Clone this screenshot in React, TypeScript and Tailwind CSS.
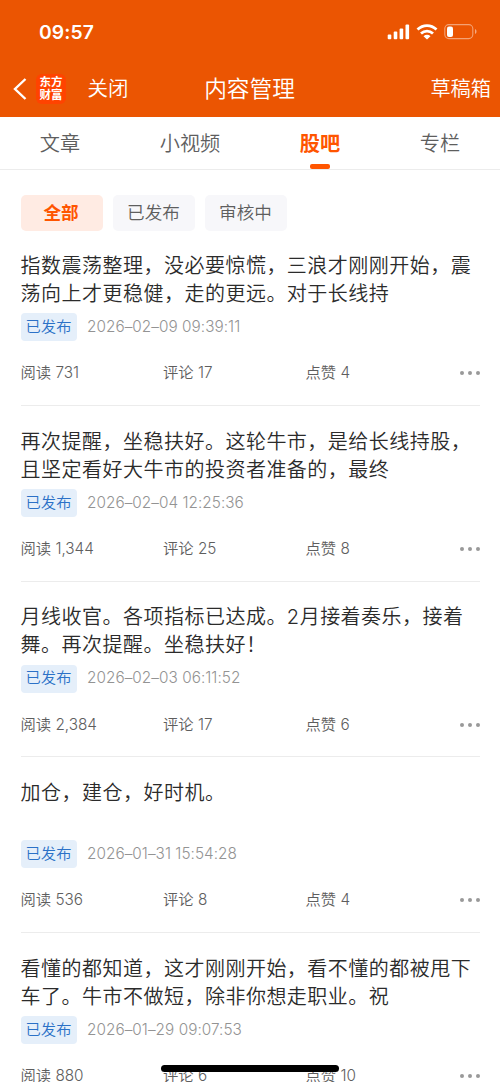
import React from "react";

type Post = {
  lines: string[];
  date: string;
  reads: string;
  comments: string;
  likes: string;
};

const posts: Post[] = [
  { lines: ["指数震荡整理，没必要惊慌，三浪才刚刚开始，震", "荡向上才更稳健，走的更远。对于长线持"], date: "2026–02–09 09:39:11", reads: "731", comments: "17", likes: "4" },
  { lines: ["再次提醒，坐稳扶好。这轮牛市，是给长线持股，", "且坚定看好大牛市的投资者准备的，最终"], date: "2026–02–04 12:25:36", reads: "1,344", comments: "25", likes: "8" },
  { lines: ["月线收官。各项指标已达成。2月接着奏乐，接着", "舞。再次提醒。坐稳扶好！"], date: "2026–02–03 06:11:52", reads: "2,384", comments: "17", likes: "6" },
  { lines: ["加仓，建仓，好时机。"], date: "2026–01–31 15:54:28", reads: "536", comments: "8", likes: "4" },
  { lines: ["看懂的都知道，这才刚刚开始，看不懂的都被甩下", "车了。牛市不做短，除非你想走职业。祝"], date: "2026–01–29 09:07:53", reads: "880", comments: "6", likes: "10" },
];

const tabs = ["文章", "小视频", "股吧", "专栏"];

function StatusBar() {
  return (
    <div className="flex h-[62px] items-center justify-between pl-[39px] pr-[23px] pt-[2px]">
      <span className="text-[19.300px] font-semibold leading-6 tracking-[0.100px]">09:57</span>
      <div className="flex items-center">
        <svg className="h-4 w-[23px]" viewBox="0 0 23 16" fill="white">
          <rect x="0.7" y="10.500" width="3.600" height="4.800" rx="1" />
          <rect x="6.700" y="7.500" width="3.600" height="7.800" rx="1" />
          <rect x="12.600" y="4.500" width="3.600" height="10.800" rx="1" />
          <rect x="18.500" y="0.500" width="3.600" height="14.800" rx="1" />
        </svg>
        <svg className="ml-[6px] h-4 w-[22px]" viewBox="0 0 22 16" fill="none" stroke="white" strokeWidth="2.800">
          <path d="M1.500 5.600C7 .400 15 .400 20.500 5.600" />
          <path d="M5 9.500C8.500 6.300 13.500 6.300 17 9.500" />
          <path d="M7.500 12.200c2-1.800 5-1.800 7 0L11 15.500z" fill="white" stroke="none" />
        </svg>
        <svg className="ml-[6px] h-4 w-[33px]" viewBox="0 0 33 16" fill="none">
          <rect x="0.800" y="0.600" width="28" height="14" rx="4" stroke="white" strokeOpacity=".45" strokeWidth="1.100" />
          <rect x="3" y="2.500" width="6" height="10.500" rx="2" fill="white" />
          <path d="M31 5c2 .800 2 4.200 0 5z" fill="white" fillOpacity=".5" />
        </svg>
      </div>
    </div>
  );
}

function NavBar() {
  return (
    <div className="grid h-[54.500px] grid-cols-[1fr_auto_1fr] items-center pl-[13px] pr-[9px]">
      <div className="flex items-center">
        <svg className="h-[22px] w-[14px]" viewBox="0 0 14 22" fill="none" stroke="white" strokeWidth="2.400">
          <path d="M12.500 1 2 11l10.500 10" />
        </svg>
        <div className="ml-[9px] flex size-[30px] flex-col items-center justify-center rounded-[6px] bg-[#ff4300] text-[11.500px] font-bold leading-[13px]">
          <span>东方</span>
          <span>财富</span>
        </div>
        <span className="ml-[21.500px] text-[20.500px] leading-[28px]">关闭</span>
      </div>
      <h1 className="-ml-[5px] text-[22.700px] leading-[30px]">内容管理</h1>
      <span className="text-right text-[20.200px] leading-[28px]">草稿箱</span>
    </div>
  );
}

function PostItem({ post }: { post: Post }) {
  return (
    <article className="h-[175.700px] border-b-[1.500px] border-[#ececec] pt-[21.800px]">
      <h2 className="h-[56px] whitespace-nowrap text-[20px] leading-[28px] tracking-[0.490px] text-[#2b2b2b]">
        {post.lines.map((line) => (
          <span key={line} className="block">{line}</span>
        ))}
      </h2>
      <div className="mt-[5.300px] flex h-7 items-center">
        <span className="flex h-7 w-14 items-center justify-center rounded-[4px] bg-[#e5effa] text-[15.300px] text-[#2b71c7]">已发布</span>
        <time className="ml-[10.500px] whitespace-nowrap text-[15.300px] tracking-[0.050px] text-[#939393]">{post.date}</time>
      </div>
      <div className="mt-[20.400px] grid h-6 grid-cols-[142.500px_142.500px_1fr_auto] items-center text-[15.300px] text-[#5e5e5e]">
        <span>阅读 {post.reads}</span>
        <span>评论 {post.comments}</span>
        <span>点赞 {post.likes}</span>
        <svg className="-mt-px h-1 w-5" viewBox="0 0 20 4" fill="#999">
          <circle cx="2" cy="2" r="2" />
          <circle cx="10" cy="2" r="2" />
          <circle cx="18" cy="2" r="2" />
        </svg>
      </div>
    </article>
  );
}

export default function App() {
  return (
    <div className="relative h-[1082px] w-[500px] overflow-hidden bg-white font-['Inter','Noto_Sans_CJK_SC',sans-serif] font-[350]">
      <header className="bg-[#eb5502] text-white">
        <StatusBar />
        <NavBar />
      </header>
      <nav className="grid h-[53px] grid-cols-[120px_140px_120px_120px] border-b-[1.500px] border-[#ececec]">
        {tabs.map((tab) => (
          <div
            key={tab}
            className={
              tab === "股吧"
                ? "relative flex justify-center pt-[12px] text-[20.200px] font-bold leading-[30px] text-[#ff5500]"
                : "flex justify-center pt-[12px] text-[20.200px] leading-[30px] text-[#5e5e5e]"
            }
          >
            {tab}
            {tab === "股吧" && <span className="absolute bottom-0 left-1/2 h-[5px] w-5 -translate-x-1/2 rounded-[2px] bg-[#ff5500]" />}
          </div>
        ))}
      </nav>
      <div className="flex gap-[10px] px-[21px] pt-[25.500px] text-[17.600px]">
        <button className="h-9 w-[82px] rounded-[5px] bg-[#ffebe3] pr-[2px] pt-px font-bold text-[#ff5500]">全部</button>
        <button className="h-9 w-[82px] rounded-[5px] bg-[#f7f7fa] pr-px pt-px text-[#5e5e5e]">已发布</button>
        <button className="h-9 w-[82px] rounded-[5px] bg-[#f7f7fa] pr-px pt-px text-[#5e5e5e]">审核中</button>
      </div>
      <main className="-mt-[0.700px] px-[20.500px]">
        {posts.map((post) => (
          <PostItem key={post.date} post={post} />
        ))}
      </main>
      <div className="absolute bottom-[10px] left-[161px] h-[7px] w-[178px] rounded-full bg-black" />
    </div>
  );
}
